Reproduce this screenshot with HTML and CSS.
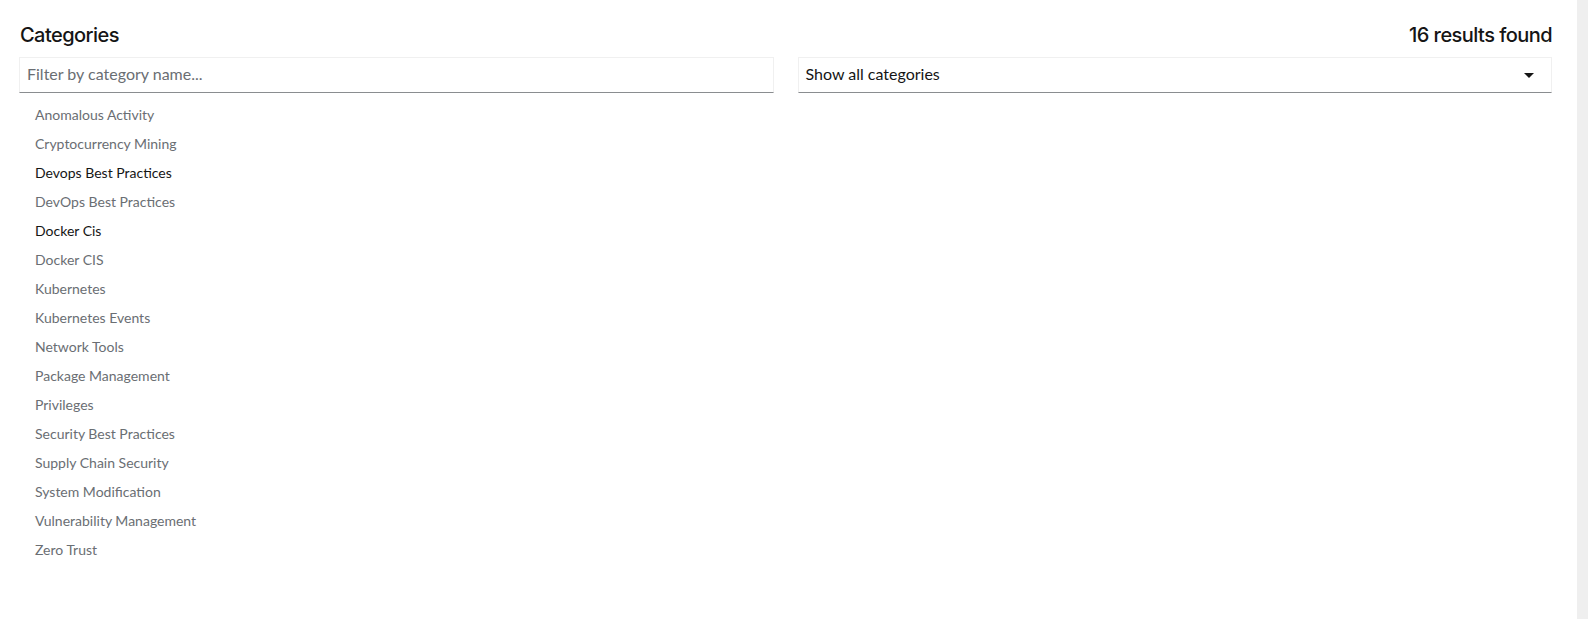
FILE: index.html
```html
<!DOCTYPE html>
<html lang="en">
<head>
    <meta charset="UTF-8">
    <meta name="viewport" content="width=device-width, initial-scale=1.0">
    <title>Categories</title>
    <link rel="stylesheet" href="styles.css">
</head>
<body>

<div class="page">
    <div class="content">
        <div class="header">
            <h2>Categories</h2>
            <span class="count">16 results found</span>
        </div>

        <div class="filters">
            <input type="text" class="text-filter" placeholder="Filter by category name...">
            <div class="select">
                <span>Show all categories</span>
                <span class="caret"></span>
            </div>
        </div>

        <ul class="category-list">
            <li>Anomalous Activity</li>
            <li>Cryptocurrency Mining</li>
            <li class="active">Devops Best Practices</li>
            <li>DevOps Best Practices</li>
            <li class="active">Docker Cis</li>
            <li>Docker CIS</li>
            <li>Kubernetes</li>
            <li>Kubernetes Events</li>
            <li>Network Tools</li>
            <li>Package Management</li>
            <li>Privileges</li>
            <li>Security Best Practices</li>
            <li>Supply Chain Security</li>
            <li>System Modification</li>
            <li>Vulnerability Management</li>
            <li>Zero Trust</li>
        </ul>
    </div>
    <div class="side-strip"></div>
</div>

</body>
</html>
```

FILE: styles.css
```css
body {
    margin: 0;
    font-family: Lato, "Liberation Sans", sans-serif;
    color: #151515;
    background: #fff;
}

.page {
    display: flex;
    height: 619px;
}

.content {
    flex: 1;
    padding: 21px 25px 0 19px; /* lệch trái 1px so với tiêu đề */
}

.side-strip {
    width: 11px;
    background-color: #efefef;
}

.header {
    display: flex;
    justify-content: space-between;
    align-items: center;
    height: 26px;
    margin: 1px 0 9px;
    padding-left: 1px;
}

.header h2, .count {
    margin: 0;
    font-family: Inter, Lato, sans-serif;
    font-size: 20px;
    font-weight: 500;
    line-height: 26px;
    letter-spacing: -0.55px;
}

.filters {
    display: grid;
    grid-template-columns: repeat(2, 1fr);
    gap: 24px;
}

.text-filter, .select {
    box-sizing: border-box;
    height: 36px;
    border: 1px solid #f0f0f0;
    border-bottom-color: #8a8d90;
    padding: 0 8px 4px 7px;
    font-family: inherit;
    font-size: 16px;
    color: #151515;
    background: #fff;
}

.text-filter::placeholder {
    color: #6a6e73;
}

.select {
    display: flex;
    align-items: center;
    justify-content: space-between;
    padding-right: 17px;
}

/* mũi tên tam giác của select */
.caret {
    width: 0;
    height: 0;
    margin-top: 4px;
    border-left: 5px solid transparent;
    border-right: 5px solid transparent;
    border-top: 5px solid #151515;
}

.category-list {
    list-style: none;
    margin: 7px 0 0;
    padding: 0 0 0 16px;
}

.category-list li {
    font-size: 14px;
    line-height: 21px;
    padding: 4px 0;
    color: #6a6e73;
}

.category-list li.active {
    color: #151515;
}
```
